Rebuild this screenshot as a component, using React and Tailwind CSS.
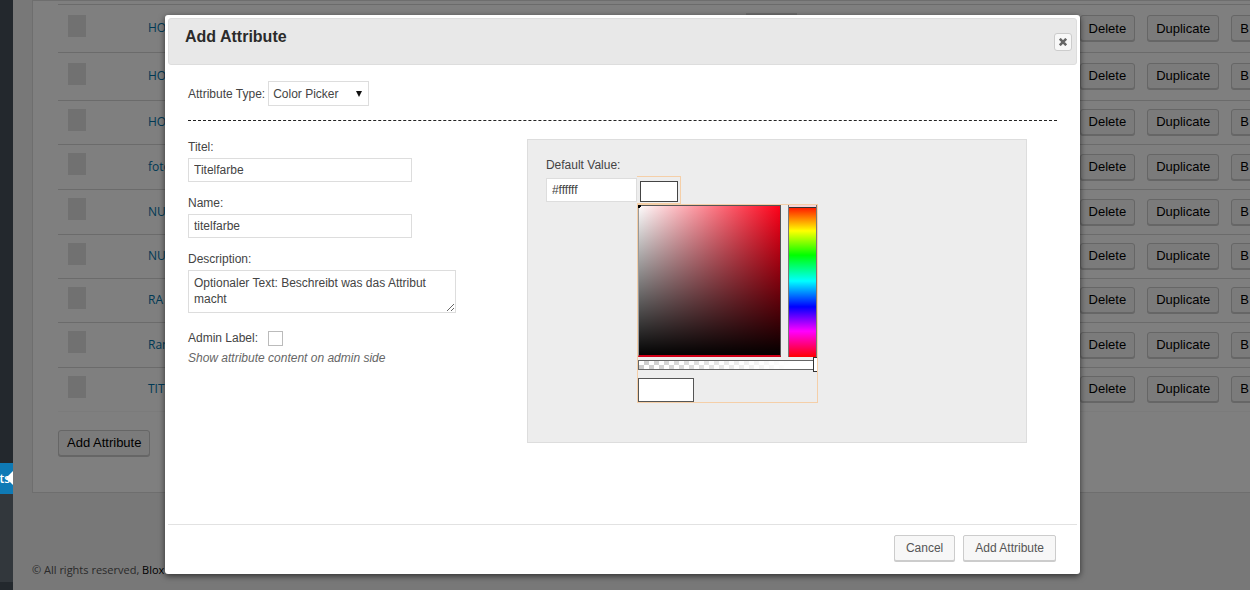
import { useState } from "react";

const rows = [
  { name: "HO", height: "h-[47px]", tag: true },
  { name: "HO", height: "h-12" },
  { name: "HO", height: "h-11" },
  { name: "foto", height: "h-[45px]" },
  { name: "NU", height: "h-[45px]" },
  { name: "NU", height: "h-11" },
  { name: "RA", height: "h-11" },
  { name: "Ran", height: "h-[45px]" },
  { name: "TIT", height: "h-11" },
];

const fieldClass =
  "block border border-[#ddd] bg-white px-[5px] text-xs text-[#444] outline-none";

function GreyButton({ children }) {
  return (
    <button
      type="button"
      className="h-[26px] rounded-[3px] border border-[#ccc] bg-[#f7f7f7] px-2 text-[13px] text-black shadow-[0_1px_0_#ccc]"
    >
      {children}
    </button>
  );
}

function Sidebar() {
  return (
    <nav className="relative z-20 flex w-[13px] shrink-0 flex-col overflow-hidden bg-[#23282d]">
      <div className="h-[463px]" />
      <a
        href="#attributes"
        className="relative flex h-[31px] items-center justify-end bg-[#0f7ab5] pr-[3px] font-['Open_Sans',sans-serif] text-xs font-semibold text-white"
      >
        ts
        <span className="absolute top-2 right-0 border-y-[7px] border-r-[7px] border-y-transparent border-r-white" />
      </a>
      <div className="h-[88px] bg-[#32373c]" />
    </nav>
  );
}

function AttributeTable() {
  return (
    <table className="w-full border-collapse text-left">
      <tbody>
        {rows.map((row, i) => (
          <tr
            key={i}
            className={`${row.height} border-b border-[#d6d6d6] last:border-[#f6f6f6]`}
          >
            <td className="w-[90px] p-0 pl-[10px]">
              <div className="mb-[5px] h-[22px] w-[18px] bg-[#e2e2e2]" />
            </td>
            <td className="p-0 font-['Open_Sans','Noto_Sans',sans-serif] text-xs text-[#0073aa]">
              <a href="#edit">{row.name}</a>
            </td>
            <td className="p-0">
              <div className="flex items-center justify-end gap-3">
                {row.tag && <span className="mr-[271px] h-[31px] w-[51px] bg-[#ddd]" />}
                <GreyButton>Delete</GreyButton>
                <GreyButton>Duplicate</GreyButton>
                <GreyButton>B</GreyButton>
              </div>
            </td>
          </tr>
        ))}
      </tbody>
    </table>
  );
}

function ColorPicker() {
  return (
    <div className="absolute top-full left-0 w-[181px] border border-[#f5cfa8]">
      <div className="flex justify-between">
        <div className="h-[152px] w-[143px] border border-t-[#555] border-r-[#555] border-b-2 border-l-[#999] border-b-[#d00018] bg-[linear-gradient(to_top,#000,transparent),linear-gradient(to_right,#fff,#ff0018)] bg-origin-border">
          <div className="-mt-px -ml-px size-[3px] border-t-2 border-l-2 border-black" />
        </div>
        <div className="h-[152px] w-[29px] border-x border-[#777] bg-[linear-gradient(to_bottom,#f00,#ff0_17%,#0f0_33%,#0ff_50%,#00f_67%,#f0f_83%,#f00)]">
          <div className="h-[3px] border-b border-[#333] bg-[#f6d5d8]" />
        </div>
      </div>
      <div className="relative mt-[3px] h-[10px] border border-[#666] bg-[linear-gradient(to_right,transparent,#fff_85%),repeating-conic-gradient(#ccc_0_25%,#fff_0_50%)] bg-[size:100%_100%,10px_8px]">
        <div className="absolute -top-1 -right-px h-[15px] w-1 border border-r-0 border-[#333] bg-white" />
      </div>
      <div className="mt-2 h-6 w-14 border border-[#555] bg-white" />
    </div>
  );
}

function AddAttributeDialog() {
  const [title, setTitle] = useState("Titelfarbe");
  const [name, setName] = useState("titelfarbe");
  const [color, setColor] = useState("#ffffff");

  return (
    <div
      role="dialog"
      aria-labelledby="dialog-title"
      className="flex w-full flex-col rounded-[3px] bg-white p-[3px] text-xs text-[#444] shadow-[0_2px_6px_rgba(0,0,0,0.6)]"
    >
      <header className="flex h-[47px] shrink-0 justify-between rounded-[3px] border border-[#ddd] bg-[#e8e8e8] pr-1 pl-4">
        <h2 id="dialog-title" className="pt-[6px] text-base font-bold text-[#2b2b2b]">
          Add Attribute
        </h2>
        <button
          type="button"
          aria-label="Close"
          className="mt-[14px] flex size-[18px] items-center justify-center rounded-[3px] border border-[#ccc] bg-[#f8f8f8]"
        >
          <svg viewBox="0 0 8 8" className="size-2" stroke="#666" strokeWidth="2.6">
            <path d="M0.8 0.8 7.2 7.2M7.2 0.8 0.8 7.2" />
          </svg>
        </button>
      </header>

      <div className="flex-1 pr-5 pl-5">
        <div className="flex items-center gap-[3px] border-b border-dashed border-[#222] pt-4 pb-[14px]">
          <label htmlFor="type">Attribute Type:</label>
          <div className="relative">
            <select
              id="type"
              className="h-[25px] w-[101px] appearance-none border border-[#ddd] bg-white pl-1 text-xs text-[#444]"
            >
              <option>Color Picker</option>
            </select>
            <span className="pointer-events-none absolute top-[10px] right-[7px] border-x-[3px] border-t-[6px] border-x-transparent border-t-[#111]" />
          </div>
        </div>

        <div className="flex pt-[18px]">
          <form className="w-[39%]">
            <label htmlFor="title" className="block h-[19px]">
              Titel:
            </label>
            <input
              id="title"
              value={title}
              onChange={(e) => setTitle(e.target.value)}
              className={`${fieldClass} h-6 w-[224px]`}
            />
            <label htmlFor="name" className="mt-[13px] block h-[19px]">
              Name:
            </label>
            <input
              id="name"
              value={name}
              onChange={(e) => setName(e.target.value)}
              className={`${fieldClass} h-6 w-[224px]`}
            />
            <label htmlFor="description" className="mt-[13px] block h-[19px]">
              Description:
            </label>
            <textarea
              id="description"
              defaultValue="Optionaler Text: Beschreibt was das Attribut macht"
              className={`${fieldClass} h-[43px] w-[268px] overflow-hidden pt-1 leading-4`}
            />
            <div className="mt-[17px] flex items-center gap-[10px]">
              <label htmlFor="admin">Admin Label:</label>
              <input
                id="admin"
                type="checkbox"
                className="size-[15px] appearance-none border border-[#bbb] bg-white"
              />
            </div>
            <p className="mt-1 text-[#666] italic">Show attribute content on admin side</p>
          </form>

          <section className="h-[304px] w-[57.5%] border border-[#ddd] bg-[#ededed] px-[18px] pt-[17px]">
            <label htmlFor="color" className="block h-[19px]">
              Default Value:
            </label>
            <div className="flex">
              <input
                id="color"
                value={color}
                onChange={(e) => setColor(e.target.value)}
                className={`${fieldClass} mt-[2px] h-6 w-[91px]`}
              />
              <div className="relative">
                <button
                  type="button"
                  aria-label="Pick a color"
                  className="block h-7 w-[44px] border border-l-0 border-[#f5cfa8] pt-[3px] pl-[3px]"
                >
                  <span
                    className="block h-[21px] w-[38px] border border-[#444]"
                    style={{ backgroundColor: color }}
                  />
                </button>
                <ColorPicker />
              </div>
            </div>
          </section>
        </div>
      </div>

      <footer className="flex h-[47px] shrink-0 items-center justify-end gap-2 border-t border-[#e2e2e2] pr-[21px]">
        <button
          type="button"
          className="h-[26px] rounded-[2px] border border-[#ccc] bg-[#f7f7f7] px-[11px] text-[#555] shadow-[0_1px_0_#ccc]"
        >
          Cancel
        </button>
        <button
          type="button"
          className="h-[26px] rounded-[2px] border border-[#ccc] bg-[#f7f7f7] px-[11px] text-[#555] shadow-[0_1px_0_#ccc]"
        >
          Add Attribute
        </button>
      </footer>
    </div>
  );
}

export default function App() {
  return (
    <div className="relative flex h-screen overflow-hidden bg-[#f1f1f1] font-['Liberation_Sans',Arial,sans-serif]">
      <Sidebar />
      <main className="flex min-w-0 flex-1 flex-col pl-[19px]">
        <div className="-mr-[10px] border border-[#ddd] bg-white pr-px pb-9 pl-[25px]">
          <div className="h-1 border-b border-[#d6d6d6]" />
          <AttributeTable />
          <div className="pt-[18px]">
            <GreyButton>Add Attribute</GreyButton>
          </div>
        </div>
        <p className="pt-[69px] font-['Open_Sans','Noto_Sans',sans-serif] text-[11px] text-[#555]">
          © All rights reserved, <span className="text-black">Blox</span>
        </p>
      </main>
      <div className="absolute inset-0 z-10 flex bg-black/50 pt-[15px] pr-[170px] pb-4 pl-[165px]">
        <AddAttributeDialog />
      </div>
    </div>
  );
}
